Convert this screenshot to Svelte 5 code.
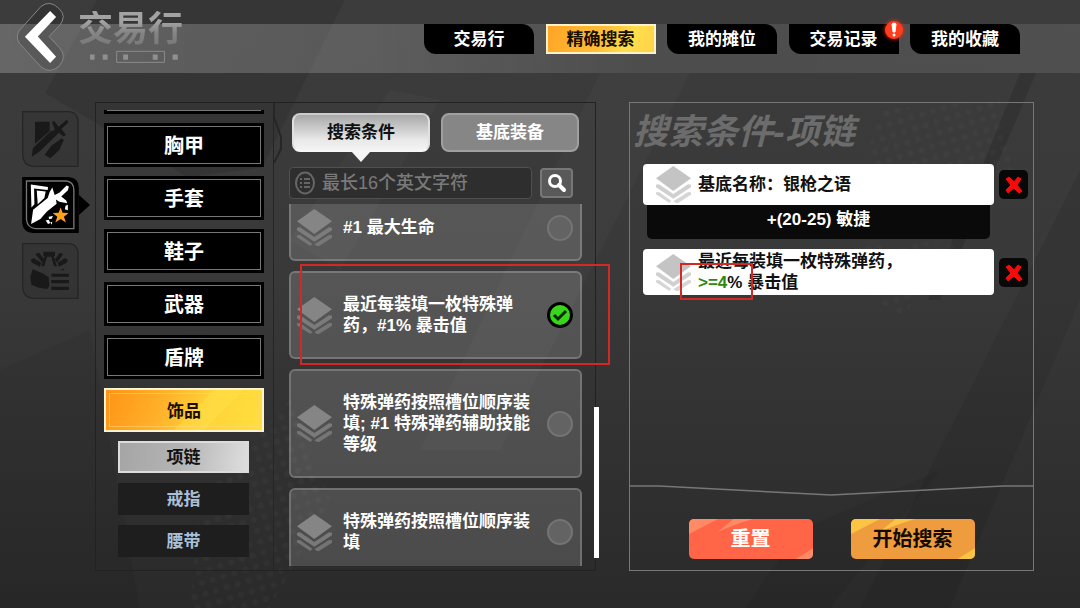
<script>
  const navTabs = [
    { label: '交易行' },
    { label: '精确搜索' },
    { label: '我的摊位' },
    { label: '交易记录', alert: true },
    { label: '我的收藏' }
  ];
  let activeNav = $state('精确搜索');

  const categories = ['胸甲', '手套', '鞋子', '武器', '盾牌', '饰品'];
  let activeCategory = $state('饰品');
  const kinds = ['项链', '戒指', '腰带'];
  let activeKind = $state('项链');

  const modes = ['搜索条件', '基底装备'];
  let activeMode = $state('搜索条件');
  let keyword = $state('');

  let affixes = $state([
    { text: '#1 最大生命', picked: false },
    { text: '最近每装填一枚特殊弹药，#1% 暴击值', picked: true },
    { text: '特殊弹药按照槽位顺序装填; #1 特殊弹药辅助技能等级', picked: false },
    { text: '特殊弹药按照槽位顺序装填', picked: false }
  ]);
</script>

{#snippet layers()}
  <svg class="layers" viewBox="0 0 105 111" aria-hidden="true">
    <path d="M52 0 105 37 52 75 0 37Z" />
    <path d="M0 56 9 55 52 84 96 55 105 56 105 64 52 98 0 64Z" opacity=".8" />
    <path d="M0 79 9 78 46 104 40 111 0 85ZM105 79 96 78 52 106 60 111 66 111 105 86Z" opacity=".7" />
  </svg>
{/snippet}

{#snippet cross()}
  <svg viewBox="0 0 29 29" width="29" height="29" aria-hidden="true">
    <path d="M7 9 10 7 15 12 19 7 22 9 18 15 23 21 20 23 15 18 9 23 7 20 12 15Z" fill="#f60a0a" stroke="#f60a0a" stroke-linejoin="round" />
  </svg>
{/snippet}

{#snippet streaks(color)}
  <svg class="streaks" viewBox="0 0 372 120" preserveAspectRatio="none" aria-hidden="true">
    <path d="M0 0H87L0 45ZM133 0H192Q130 18 85 40ZM372 88V120H320Z" fill={color} />
  </svg>
{/snippet}

<div class="page">
  <svg class="backdrop" viewBox="0 0 1080 608" preserveAspectRatio="none" aria-hidden="true">
    <defs>
      <pattern id="dots" width="16" height="16" patternUnits="userSpaceOnUse" patternTransform="rotate(28)">
        <circle cx="4" cy="4" r="3" fill="#fff" />
        <circle cx="12" cy="12" r="3" fill="#fff" />
      </pattern>
    </defs>
    <path d="M97 0 45 93 187 177 262 168 345 0Z" fill="#000" opacity=".09" />
    <path d="M390 90 440 100 340 270 290 240Z" fill="#fff" opacity=".025" />
    <path d="M600 73H690L500 450H420Z" fill="#fff" opacity=".025" />
    <path d="M0 370 90 330 140 608H0Z" fill="#000" opacity=".05" />
    <path d="M1020 73 1036 73 940 300 928 300Z" fill="#000" opacity=".13" />
    <path d="M1080 170V300L950 608H860Z" fill="#000" opacity=".07" />
    <path d="M940 470 830 608H745L800 530Z" fill="#000" opacity=".06" />
    <path d="M200 500 290 400 330 500 270 608H190Z" fill="url(#dots)" opacity=".025" />
    <path d="M880 110 1000 100 1020 190 860 180ZM820 250 960 240 900 320Z" fill="url(#dots)" opacity=".02" />
  </svg>

  <header>
    <button class="back" aria-label="返回">
      <svg viewBox="48 3 146 208" width="49" height="69" aria-hidden="true">
        <path d="M123 16Q150-4 176 22 202 46 178 74L147 107 178 141Q202 166 178 195 150 222 122 198L58 128Q44 108 58 88Z" fill="#000" fill-opacity=".12" stroke="#858585" stroke-width="3" />
        <path d="M150 30 168 48 113 107 168 168 150 187 74 108Z" fill="#fff" />
      </svg>
    </button>
    <div class="brand">
      <h1>交易行</h1>
      <svg viewBox="234 150 312 40" width="104" height="13" aria-hidden="true" fill="#909090">
        <path d="M267 164h14v16h-14zM306 164h15v16h-15zM369 164h15v16h-15zM460 164h15v16h-15zM521 164h16v16h-16z" />
        <path d="M349 154h147v34H349z" fill="none" stroke="#8c8c8c" stroke-width="3" />
      </svg>
    </div>
    <nav>
      {#each navTabs as tab}
        <button class="nav-tab" class:on={activeNav === tab.label} onclick={() => (activeNav = tab.label)}>
          {tab.label}
          {#if tab.alert}
            <svg class="alert" viewBox="0 0 24 24" width="24" height="24" aria-hidden="true">
              <circle cx="12" cy="12" r="9" fill="#ff3d1c" />
              <path d="M10 6Q12 4 14 6L13 14H11Z" fill="#fff" stroke="#fff" />
              <circle cx="12" cy="17" r="1.5" fill="#fff" />
            </svg>
          {/if}
        </button>
      {/each}
    </nav>
  </header>

  <main>
    <aside>
      <button class="side" aria-label="装备">
        <svg viewBox="66 62 171 168" width="57" height="56" aria-hidden="true">
          <path d="M68 64H208Q234 66 234 96V228H100Q70 226 68 196Z" fill="#000" fill-opacity=".08" stroke="#252525" stroke-width="4" />
          <g fill="#191919">
            <path d="M105 94H149V122L105 160Z" />
            <path d="M95 199 99 173 152 123 165 119 156 96 162 91 176 109 199 89 205 92 202 99 184 116 198 134 190 138 176 127 167 137 118 184Z" />
            <path d="M134 193 154 166 186 144 191 149 178 179 151 204Z" />
          </g>
        </svg>
      </button>
      <button class="side" aria-label="精选装备" aria-current="true">
        <svg viewBox="66 261 171 169" width="57" height="56" aria-hidden="true">
          <path d="M66 261H206Q237 263 237 294V430H98Q68 428 66 398Z" fill="#000" />
          <path d="M79 273H199Q222 276 222 300V417H106Q82 414 79 390Z" fill="none" stroke="#777" stroke-width="4" />
          <g fill="#fff">
            <path d="M92 284 144 291 143 300 102 296 103 343 94 353Z" />
            <path d="M110 302 137 305 133 324 113 343Z" />
            <path d="M93 403 99 360 143 324 149 306 157 293 164 315 179 308 200 287 207 290 204 301 184 320 199 332 202 340 178 336 168 329 170 342 140 366 121 388Z" />
            <path d="M197 348 204 345 204 361 195 358Z" />
            <path d="M146 381 159 379 155 387 147 388ZM137 392 146 390 151 400 144 403ZM151 398 157 396 155 405Z" />
          </g>
          <path d="M182 353 188 369 206 370 192 381 198 398 182 388 166 398 172 381 158 370 176 369Z" fill="#ff9f1c" />
        </svg>
        <i class="pointer"></i>
      </button>
      <button class="side" aria-label="打造">
        <svg viewBox="66 460 171 168" width="57" height="56" aria-hidden="true">
          <path d="M68 462H208Q234 464 234 494V626H100Q70 624 68 594Z" fill="#000" fill-opacity=".08" stroke="#252525" stroke-width="4" />
          <g fill="#191919">
            <path d="M130 486H165V499H161L171 530H162L154 501H141L133 530H124L134 499H130Z" />
            <path d="M106 493 117 489 133 509 127 519ZM92 511 101 505 124 519 120 531 96 519ZM190 493 179 489 165 509 171 519ZM204 511 195 505 173 519 177 531 200 519Z" />
            <path d="M98 539 126 550 146 562 148 589 142 598 116 594 94 585 91 562Z" />
            <path d="M154 552H207V561H154ZM154 571H207V581H154ZM154 591H207V601H154ZM180 542 190 537 194 542Z" />
          </g>
        </svg>
      </button>
    </aside>

    <section class="browser">
      <svg class="notch" viewBox="0 0 10 60" width="10" height="60" aria-hidden="true">
        <path d="M1 0V14L8 34V46L1 60" fill="none" stroke="#272727" stroke-width="2" />
      </svg>
      <div class="cats">
        <div class="cat"><span></span></div>
        {#each categories as name}
          <button class="cat" class:on={activeCategory === name} onclick={() => (activeCategory = name)}><span>{name}</span></button>
        {/each}
        {#each kinds as name}
          <button class="kind" class:on={activeKind === name} onclick={() => (activeKind = name)}>{name}</button>
        {/each}
      </div>

      <div class="finder">
        <div class="modes">
          {#each modes as name}
            <button class="mode" class:on={activeMode === name} onclick={() => (activeMode = name)}>{name}</button>
          {/each}
        </div>
        <form class="search" onsubmit={(e) => e.preventDefault()}>
          <label class="field">
            <svg viewBox="0 0 22 24" width="22" height="24" fill="none" stroke="#666" stroke-width="2" aria-hidden="true">
              <ellipse cx="11" cy="12" rx="9" ry="10.5" />
              <path d="M6 8h2M10 8h6M6 12h2M10 12h6M6 16h2M10 16h6" />
            </svg>
            <input type="text" aria-label="关键词" placeholder="最长16个英文字符" bind:value={keyword} />
          </label>
          <button class="go" aria-label="搜索">
            <svg viewBox="0 0 20 20" width="20" height="20" aria-hidden="true">
              <circle cx="8" cy="8" r="5.5" fill="none" stroke="#fff" stroke-width="3" />
              <path d="M12 12 17 17" stroke="#fff" stroke-width="4" stroke-linecap="round" />
            </svg>
          </button>
        </form>
        <div class="list">
          {#each affixes as affix}
            <label class="affix">
              {@render layers()}
              <span class="affix-text">{affix.text}</span>
              <span class="tick">
                <input type="checkbox" bind:checked={affix.picked} />
                <svg viewBox="0 0 26 26" width="26" height="26" aria-hidden="true">
                  <circle cx="13" cy="13" r="11.5" fill="#38d51b" stroke="#000" stroke-width="3" />
                  <path d="M7 13 11 17 19 9" fill="none" stroke="#0b2a06" stroke-width="3" />
                </svg>
              </span>
            </label>
          {/each}
        </div>
      </div>
      <i class="thumb"></i>
      <i class="mark mark-affix"></i>
    </section>

    <section class="summary">
      <h2>搜索条件-项链</h2>
      <div class="filter">
        <div class="card">{@render layers()}<span>基底名称：银枪之语</span></div>
        <button class="remove" aria-label="移除基底">{@render cross()}</button>
        <div class="detail">+(20-25) 敏捷</div>
      </div>
      <div class="filter">
        <div class="card">
          {@render layers()}<span>最近每装填一枚特殊弹药，<br /><em>&gt;=4</em>% 暴击值</span>
          <i class="mark mark-value"></i>
        </div>
        <button class="remove" aria-label="移除词缀">{@render cross()}</button>
      </div>
      <footer>
        <svg class="rule" viewBox="0 0 405 11" preserveAspectRatio="none" aria-hidden="true">
          <path d="M0 1H29L202 10 375 1H405" fill="none" stroke="#777" stroke-width="1.5" />
        </svg>
        <div class="actions">
          <button class="action reset">{@render streaks('#ff8a66')}<span>重置</span></button>
          <button class="action start">{@render streaks('#fcc443')}<span>开始搜索</span></button>
        </div>
      </footer>
    </section>
  </main>
</div>

<style>
  :global(body) {
    margin: 0;
    background: #303030;
  }

  * {
    box-sizing: border-box;
  }

  .page {
    position: relative;
    display: flex;
    flex-direction: column;
    height: 100vh;
    min-height: 540px;
    overflow: hidden;
    color: #fff;
    font: bold 17px/21px 'Liberation Sans', 'Noto Sans CJK SC', sans-serif;
    background: linear-gradient(#3c3c3c, #393939 45%, #2a2a2a);
  }

  button {
    position: relative;
    padding: 0;
    border: 0;
    color: inherit;
    font: inherit;
    background: none;
    cursor: pointer;
  }

  svg {
    display: block;
  }

  .backdrop {
    position: absolute;
    inset: 0;
    width: 100%;
    height: 100%;
  }

  header {
    position: relative;
    display: flex;
    flex: none;
    align-items: flex-start;
    height: 73px;
    padding: 2px 60px 0 16px;
    background:
      linear-gradient(90deg, #ffffff38, #ffffff2c 35%, #ffffff17 60%, #ffffff1a) 0 24px / 100% 49px no-repeat;
  }

  .brand {
    margin: 9px 0 0 13px;
  }

  h1 {
    margin: 0 0 3px;
    color: transparent;
    font-size: 35px;
    line-height: 36px;
    background: linear-gradient(#a3a3a3 30%, #858585 60%, #777);
    -webkit-background-clip: text;
    background-clip: text;
  }

  nav {
    display: flex;
    justify-content: space-between;
    width: 596px;
    margin: 22px 0 0 auto;
  }

  .nav-tab {
    width: 110px;
    height: 30px;
    background: #000;
    border-radius: 0 12px 0 12px;
  }

  .nav-tab.on {
    color: #1a0f00;
    background: linear-gradient(115deg, #ffa526, #ffbd35 50%, #ffdf4e 75%, #ffd247);
    border: 2px solid #fff1c9;
    border-radius: 0;
  }

  .alert {
    position: absolute;
    top: -6px;
    right: -7px;
    filter: drop-shadow(0 0 2px #ff2a10);
  }

  main {
    position: relative;
    display: flex;
    flex: 1;
    min-height: 0;
    padding: 29px 46px 37px 22px;
  }

  aside {
    display: flex;
    flex: none;
    flex-direction: column;
    gap: 10px;
    margin: 9px 16px 0 0;
  }

  .pointer {
    position: absolute;
    top: 18px;
    left: 57px;
    border: solid transparent;
    border-width: 10px 0 10px 11px;
    border-left-color: #000;
  }

  .browser {
    position: relative;
    display: flex;
    flex: 501 1 501px;
    min-width: 0;
    margin-right: 33px;
    border: 1px solid #222;
  }

  .notch {
    position: absolute;
    top: 0;
    left: 177px;
  }

  .cats {
    display: flex;
    flex: none;
    flex-direction: column;
    justify-content: flex-end;
    gap: 9px;
    margin-top: 7px;
    padding: 0 9px 13px 8px;
    overflow: hidden;
    border-right: 1px solid #252525;
  }

  .cat {
    flex: none;
    width: 160px;
    height: 44px;
    padding: 3px;
    font-size: 20px;
    background: #000;
  }

  .cat span {
    display: grid;
    place-items: center;
    height: 100%;
    padding-top: 2px;
    border: 1px solid #777;
  }

  .cat.on {
    color: #1a0f00;
    font-size: 17px;
    background:
      linear-gradient(135deg, transparent 55%, #ffe34a66 55%, #ffe34a66 70%, transparent 70%),
      linear-gradient(110deg, #ff9416, #ffb029 35%, #ffd43a 65%, #ffdf3c);
    border: 2px solid #fff3d0;
  }

  .cat.on span {
    border-color: #ffd77a88;
  }

  .kind {
    flex: none;
    height: 32px;
    margin: 0 15px 1px 14px;
    color: #a9c0d8;
    background: #1e1e1e;
  }

  .kind:last-child {
    margin-bottom: 0;
  }

  .kind.on {
    color: #111;
    background: linear-gradient(100deg, #a5a5a5, #b5b5b5 50%, #dedede);
    border: 2px solid #dcdcdc;
  }

  .finder {
    display: flex;
    flex: 1;
    flex-direction: column;
    min-width: 0;
    padding: 10px 13px 4px 15px;
  }

  .modes {
    display: flex;
    gap: 11px;
    padding: 0 3px;
  }

  .mode {
    flex: 1;
    height: 39px;
    background: #868686;
    border: 2px solid #a0a0a0;
    border-radius: 8px;
  }

  .mode.on {
    color: #111;
    background: linear-gradient(#a8a8a8, #e8e8e8 70%, #f4f4f4);
    border-color: #ccc #e0e0e0 #f6f6f6;
  }

  .mode.on::after {
    position: absolute;
    top: 36px;
    left: calc(50% - 10px);
    border: solid transparent;
    border-width: 11px 10px 0;
    border-top-color: #f6f6f6;
    content: '';
  }

  .search {
    display: flex;
    flex: none;
    gap: 8px;
    align-items: center;
    margin: 15px 0 5px;
    padding-right: 9px;
  }

  .field {
    display: flex;
    flex: 1;
    gap: 6px;
    align-items: center;
    height: 32px;
    min-width: 0;
    padding: 0 4px;
    background: #2e2e2e;
    border: 1px solid #505050;
    border-radius: 4px;
  }

  .field svg {
    flex: none;
  }

  input[type='text'] {
    flex: 1;
    min-width: 0;
    padding: 0;
    color: #ddd;
    font: 500 18px/24px 'Liberation Sans', 'Noto Sans CJK SC', sans-serif;
    background: none;
    border: 0;
    outline: 0;
  }

  input::placeholder {
    color: #7a7a7a;
    opacity: 1;
  }

  .go {
    display: grid;
    place-items: center;
    width: 33px;
    height: 30px;
    background: #595959;
    border: 2px solid #777;
    border-radius: 4px;
  }

  .list {
    display: flex;
    flex: 1;
    flex-direction: column;
    gap: 10px;
    min-height: 0;
    overflow: hidden;
  }

  .affix {
    display: grid;
    flex: none;
    grid-template-columns: 35px 1fr 26px;
    column-gap: 8px;
    align-items: center;
    padding: 21px 7px 21px 6px;
    color: #fff;
    background: #ffffff26;
    border: 2px solid #ffffff33;
    border-radius: 6px;
  }

  .affix:first-child {
    margin-top: -10px;
  }

  .layers {
    flex: none;
    width: 35px;
    height: 37px;
    margin: -8px 0;
    fill: #858585;
  }

  .affix-text {
    padding-left: 3px;
  }

  .tick {
    display: grid;
    margin: -3px 0;
  }

  .tick > * {
    grid-area: 1 / 1;
  }

  .tick input {
    width: 26px;
    height: 26px;
    margin: 0;
    appearance: none;
    background: #636363;
    border: 2px solid #747474;
    border-radius: 50%;
  }

  .tick svg {
    visibility: hidden;
    pointer-events: none;
  }

  .tick input:checked + svg {
    visibility: visible;
  }

  .thumb {
    position: absolute;
    top: 304px;
    right: -4px;
    bottom: 12px;
    width: 5px;
    background: #fff;
  }

  .mark {
    position: absolute;
    pointer-events: none;
    border: 2px solid #cf2a25;
  }

  .mark-affix {
    top: 161px;
    right: -15px;
    left: 204px;
    height: 101px;
  }

  .mark-value {
    top: 14px;
    left: 37px;
    width: 73px;
    height: 37px;
  }

  .summary {
    display: flex;
    flex: 405 1 405px;
    flex-direction: column;
    min-width: 0;
    border: 1px solid #777;
  }

  h2 {
    margin: 11px 0 14px 3px;
    color: #6c6c6c;
    font-size: 35px;
    font-style: italic;
    line-height: 36px;
  }

  .filter {
    display: grid;
    grid-template-columns: 1fr 29px;
    column-gap: 5px;
    align-items: center;
    margin: 0 5px 10px 13px;
  }

  .card {
    position: relative;
    display: flex;
    gap: 7px;
    align-items: center;
    min-height: 41px;
    padding: 2px 13px;
    color: #111;
    background: #fff;
    border-radius: 4px;
  }

  .card .layers {
    fill: #c4c4c4;
  }

  .card em {
    color: #2c8a12;
    font-style: normal;
  }

  .remove {
    height: 29px;
    background: #080808;
    border-radius: 5px;
  }

  .detail {
    height: 34px;
    margin: 0 4px;
    line-height: 30px;
    text-align: center;
    background: #0a0a0a;
    border-radius: 0 0 5px 5px;
  }

  footer {
    margin-top: auto;
    padding-bottom: 11px;
  }

  .rule {
    width: 100%;
    height: 11px;
  }

  .actions {
    display: flex;
    gap: 38px;
    justify-content: center;
    margin-top: 23px;
  }

  .action {
    width: 124px;
    height: 40px;
    overflow: hidden;
    font-size: 20px;
    border-radius: 5px;
  }

  .action span {
    position: relative;
  }

  .streaks {
    position: absolute;
    inset: 0;
    width: 100%;
    height: 100%;
  }

  .reset {
    background: #ff6546;
  }

  .start {
    color: #140b00;
    background: #ef9c3e;
  }
</style>
